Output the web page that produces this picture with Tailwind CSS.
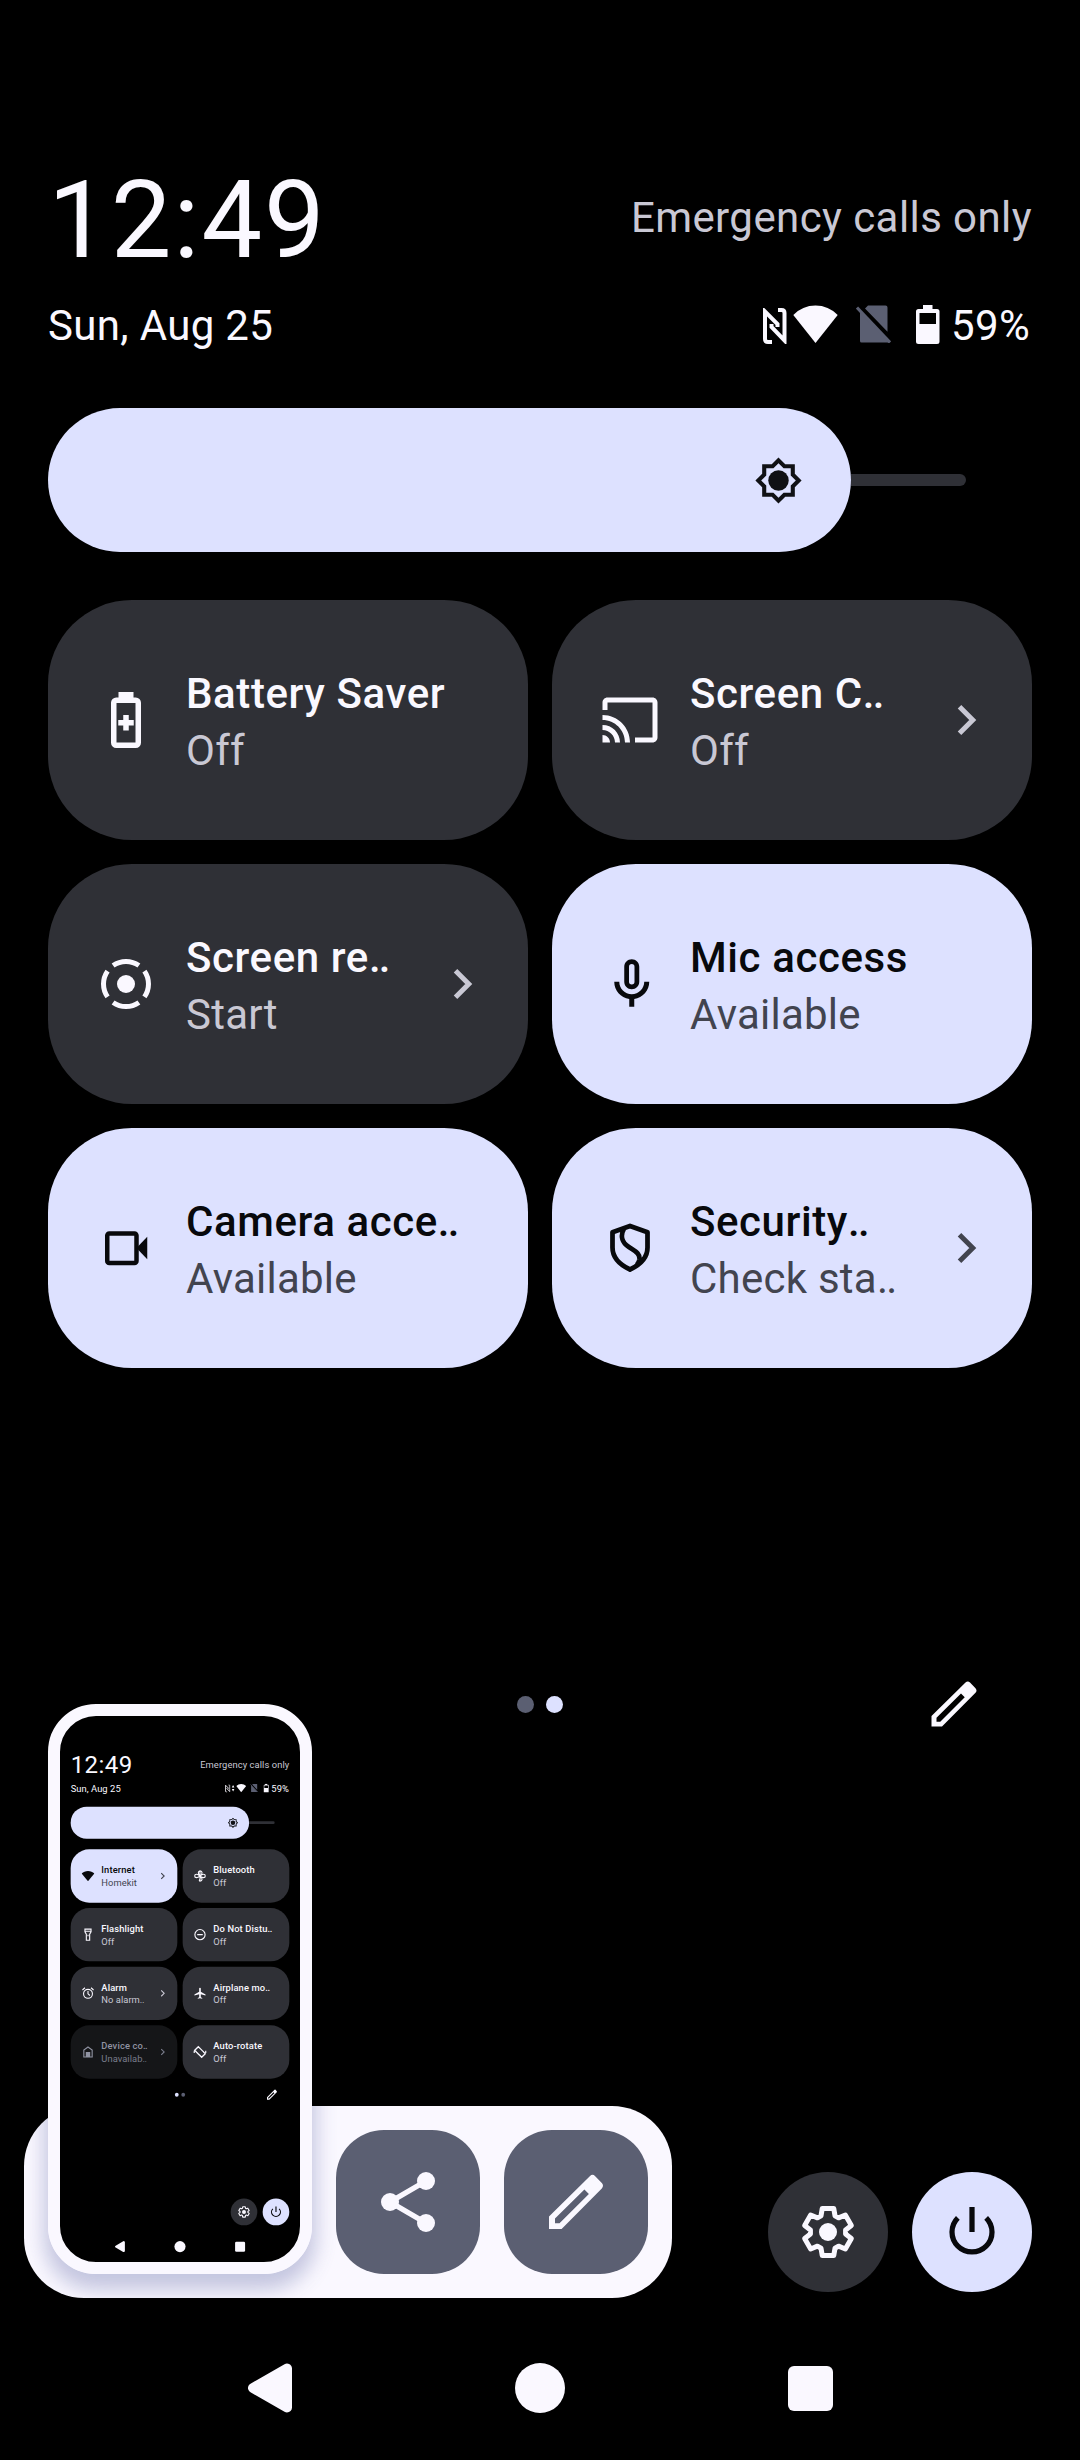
<!DOCTYPE html>
<html lang="en">
<head>
  <meta charset="UTF-8" />
  <meta name="viewport" content="width=device-width, initial-scale=1.0"/>
  <title>Quick Settings</title>
  <script src="https://cdn.jsdelivr.net/npm/@tailwindcss/browser@4"></script>
</head>
<body class="bg-black font-['Roboto',sans-serif]">
  <div class="relative w-[1080px] h-[2460px] overflow-hidden">
    <div id="main"></div>

    <!-- Screenshot popup -->
    <div class="absolute left-6 top-[2106px] w-[648px] h-48 rounded-[60px] bg-[#faf8ff] overflow-hidden flex justify-end items-center gap-6 pr-6">
      <!-- thumbnail shadow, only falls on the bar -->
      <div class="absolute left-6 -top-20 w-[264px] h-[248px] rounded-[48px] shadow-[0_12px_20px_4px_rgba(70,80,150,0.3)]"></div>
      <button class="size-36 rounded-[48px] bg-[#5b5f72] text-[#faf8ff] flex items-center justify-center">
        <svg class="size-[72px]" viewBox="0 0 24 24" fill="currentColor"><path d="M18 5 6 12l12 7" fill="none" stroke="currentColor" stroke-width="1.8"/><circle cx="18" cy="5" r="3"/><circle cx="6" cy="12" r="3"/><circle cx="18" cy="19" r="3"/></svg>
      </button>
      <button class="size-36 rounded-[48px] bg-[#5b5f72] text-[#faf8ff] flex items-center justify-center">
        <svg class="size-[72px]" viewBox="0 0 24 24" fill="currentColor" fill-rule="evenodd"><path d="M3 21v-4.2L16.600 3.400q.9-.9 1.800 0l2.200 2.300q.8.9 0 1.800L7.200 21zM5 19.100h1.500l9.800-9.800-1.500-1.500L5 17.500z"/></svg>
      </button>
    </div>
    <div class="absolute left-12 top-[1704px] w-[264px] h-[570px] rounded-[48px] border-12 border-[#faf8ff] bg-black overflow-hidden">
      <div id="thumb" class="w-[1080px] h-[2460px] origin-top-left scale-[0.2222]"></div>
    </div>
  </div>

  <script>
    const icons = {
      saver: '<path d="M9 .8h6v3H9z"/><rect x="7.1" y="4.1" width="9.8" height="18" rx="1" fill="none" stroke="currentColor" stroke-width="2.2"/><path d="M10.9 10h2.2v2h2v2.2h-2v2h-2.2v-2h-2V12h2z"/>',
      cast: '<path d="M1 18v3h3c0-1.66-1.34-3-3-3zm0-4v2c2.76 0 5 2.24 5 5h2c0-3.87-3.13-7-7-7zm0-4v2c4.97 0 9 4.03 9 9h2c0-6.08-4.93-11-11-11zm20-7H3c-1.1 0-2 .9-2 2v3h2V5h18v14h-7v2h7c1.1 0 2-.9 2-2V5c0-1.1-.9-2-2-2z"/>',
      record: '<circle cx="12" cy="12" r="3.6"/><path d="M6.84 4.63a9 9 0 0 1 10.32 0M19.37 6.84a9 9 0 0 1 0 10.32M17.16 19.37a9 9 0 0 1-10.32 0M4.63 17.16a9 9 0 0 1 0-10.32" fill="none" stroke="currentColor" stroke-width="2"/>',
      mic: '<path transform="translate(.7 .1)" fill-rule="evenodd" d="M12 14c1.66 0 3-1.34 3-3V5c0-1.66-1.34-3-3-3S9 3.34 9 5v6c0 1.66 1.34 3 3 3zm-1.1-9a1.1 1.1 0 0 1 2.2 0v6a1.1 1.1 0 0 1-2.2 0zM17 11c0 2.76-2.24 5-5 5s-5-2.24-5-5H5c0 3.53 2.61 6.43 6 6.92V21h2v-3.08c3.39-.49 6-3.39 6-6.92z"/>',
      camera: '<rect x="4.5" y="6.2" width="11.7" height="11.8" rx=".8" fill="none" stroke="currentColor" stroke-width="1.8"/><path d="m16.2 12 4.3-4.5v9z"/>',
      shield: '<path d="m12 3.200 7 2.500v6.100c0 4-2.700 6.800-7 8.800-4.300-2-7-4.800-7-8.800V5.700zM9.600 4.200C8.300 6.500 8.500 9 10.500 10.800c2.600 2.300 5.500 2.700 5.300 5.700-.1 1-.5 1.600-1.100 2.300" fill="none" stroke="currentColor" stroke-width="1.9" stroke-linejoin="round"/>',
      wifi: '<path d="M12 21.500.6 7.500C3.500 4.600 7.600 3 12 3s8.500 1.600 11.400 4.500z"/>',
      bluetooth: '<path d="M12 2v20M12 2.500c5 .5 5 6 0 9.500M12 21.500c5-.5 5-6 0-9.500M12 2.500C8 4 8 8 12 12s-4 8 0 9.500M2.500 12c0-4 5-4 9.500 0-4.500 4-9.500 4-9.500 0M21.500 12c0-4-5-4-9.500 0 4.500 4 9.500 4 9.500 0" fill="none" stroke="currentColor" stroke-width="2"/>',
      torch: '<path d="M6.500 2h11v5l-2.500 4v11H9V11L6.500 7zM6.500 6h11M12 12v3" fill="none" stroke="currentColor" stroke-width="2"/>',
      dnd: '<circle cx="12" cy="12" r="9.200" fill="none" stroke="currentColor" stroke-width="2"/><path d="M7 11h10v2H7z"/>',
      alarm: '<circle cx="12" cy="13" r="8" fill="none" stroke="currentColor" stroke-width="2"/><path d="M12 8v5l3.500 3M2 6l4.500-4M22 6l-4.500-4" fill="none" stroke="currentColor" stroke-width="2"/>',
      plane: '<path d="M22 16v-2l-8.500-5V3.500a1.500 1.500 0 0 0-3 0V9L2 14v2l8.500-2.500V19L8 20.500V22l4-1 4 1v-1.500L13.500 19v-5.500z"/>',
      home: '<path d="M4.500 21V8.500L12 3l7.500 5.500V21z" fill="none" stroke="currentColor" stroke-width="2"/><path d="M8 12h8v9H8z"/>',
      rotate: '<path d="M12.500 6 9 2.500 2.500 9 6 12.500M2.500 9 9 15.500M11.500 18l3.500 3.500 6.500-6.500-3.500-3.500M21.500 15 12.500 6M1.500 14v-4M22.500 10v4M9 15.500l2.500 2.500" fill="none" stroke="currentColor" stroke-width="2.400"/>'
    };

    const mainTiles = [
      { icon: 'saver', title: 'Battery Saver', sub: 'Off' },
      { icon: 'cast', title: 'Screen C..', sub: 'Off', more: true },
      { icon: 'record', title: 'Screen re..', sub: 'Start', more: true },
      { icon: 'mic', title: 'Mic access', sub: 'Available', state: 'on' },
      { icon: 'camera', title: 'Camera acce..', sub: 'Available', state: 'on' },
      { icon: 'shield', title: 'Security..', sub: 'Check sta..', state: 'on', more: true }
    ];

    const thumbTiles = [
      { icon: 'wifi', title: 'Internet', sub: 'Homekit', state: 'on', more: true },
      { icon: 'bluetooth', title: 'Bluetooth', sub: 'Off' },
      { icon: 'torch', title: 'Flashlight', sub: 'Off' },
      { icon: 'dnd', title: 'Do Not Distu..', sub: 'Off' },
      { icon: 'alarm', title: 'Alarm', sub: 'No alarm..', more: true },
      { icon: 'plane', title: 'Airplane mo..', sub: 'Off' },
      { icon: 'home', title: 'Device co..', sub: 'Unavailab..', state: 'disabled', more: true },
      { icon: 'rotate', title: 'Auto-rotate', sub: 'Off' }
    ];

    const colors = {
      on: ['bg-[#dde1ff] text-[#08090c]', 'text-[#42444f]'],
      off: ['bg-[#2f3036] text-[#faf8ff]', 'text-[#c9c8d4]'],
      disabled: ['bg-[#151618] text-[#9093a2]', 'text-[#7b7e8d]']
    };

    // truncated labels end in two tightly set dots
    const label = s => s.replace('..', '<span class="tracking-[-0.04em]">..</span>');

    function tile(t) {
      const [box, sub] = colors[t.state || 'off'];
      return `
        <div class="h-60 rounded-[84px] pl-12 pr-9 flex items-center ${box}">
          <svg class="size-[60px] shrink-0" viewBox="0 0 24 24" fill="currentColor">${icons[t.icon]}</svg>
          <div class="ml-[30px] pt-1 flex-1 text-[42px] leading-[57px] whitespace-nowrap">
            <div class="font-medium tracking-[0.014em]">${label(t.title)}</div>
            <div class="tracking-[0.006em] ${sub}">${label(t.sub)}</div>
          </div>
          ${t.more ? `<svg class="size-[60px] shrink-0 ${sub}" viewBox="0 0 24 24" fill="none" stroke="currentColor" stroke-width="2"><path d="m9.400 6.700 5.300 5.300-5.300 5.300"/></svg>` : ''}
        </div>`;
    }

    function screen(tiles, page, transfer) {
      const dot = i => i === page ? 'bg-[#dde1ff]' : 'bg-[#5b5f72]';
      return `
      <div class="w-[1080px] h-[2460px] px-12 pt-[156px] flex flex-col text-[#faf8ff]">
        <!-- clock and status icons -->
        <div class="h-32 flex items-center justify-between">
          <div class="text-[108px] leading-[128px] tracking-[0.018em]">12:49</div>
          <div class="mb-[5px] text-[42px] leading-[48px] tracking-[0.01em] text-[#c9c8d4]">Emergency calls only</div>
        </div>
        <div class="mt-[18px] h-12 flex items-center justify-between text-[42px] leading-[48px] tracking-[0.008em]">
          <div>Sun, Aug 25</div>
          <div class="flex items-center pr-[2px]">
            <svg class="w-6 h-9 mb-px" viewBox="0 0 24 36" fill="none" stroke="currentColor" stroke-width="4"><path d="M9 34H5q-3 0-3-3V3.500L14.500 16v3M15 2h3.500q3 0 3 3v27.500L8.500 19v-3"/></svg>
            ${transfer ? '<svg class="w-4 h-9 ml-1" viewBox="0 0 16 36" fill="currentColor"><path d="m8 3 6 11H2zM8 32 2 21h12z"/></svg>' : ''}
            <svg class="w-[45px] h-[38px] ml-[6px] mb-[5px]" viewBox="0 0 45 38" fill="currentColor"><path d="M22.500 38 .3 10Q9.500.5 22.500.5T44.700 10z"/></svg>
            <svg class="w-[35px] h-[38px] ml-[18px] mb-[5px] text-[#5b5f72]" viewBox="0 0 35 38" fill="currentColor"><path d="M9 3.500 12 .5h17.500q2 0 2 2v24.300zM4 6v30q0 1.500 1.500 1.500H33z"/><path d="m1 2.500 33 35" stroke="currentColor" stroke-width="3"/></svg>
            <svg class="w-6 h-[39px] ml-[25px] mb-[4px]" viewBox="0 0 24 39" fill="currentColor" fill-rule="evenodd"><path d="M7 4V0h9.500v4H21q2.500 0 2.500 2.500v30q0 2.500-2.500 2.500H2.500Q0 39 0 36.500v-30Q0 4 2.500 4zM3.500 8v11H20V8z"/></svg>
            <div class="ml-[11px]">59%</div>
          </div>
        </div>

        <!-- brightness -->
        <div class="mt-[58px] h-36 flex items-center">
          <div class="w-[803px] h-36 rounded-full bg-[#dde1ff] text-[#101115] flex items-center justify-end pr-12">
            <svg class="size-[49px]" viewBox="0 0 24 24" fill="currentColor" fill-rule="evenodd"><path d="M20 8.690V4h-4.690L12 .690 8.690 4H4v4.690L.690 12 4 15.310V20h4.690L12 23.310 15.310 20H20v-4.690L23.310 12zM18 14.480V18h-3.520L12 20.480 9.520 18H6v-3.520L3.520 12 6 9.520V6h3.520L12 3.520 14.480 6H18v3.520L20.480 12z"/><circle cx="12" cy="12" r="5"/></svg>
          </div>
          <div class="w-[115px] h-3 rounded-r-full bg-[#2f3036]"></div>
        </div>

        <div class="mt-12 h-[1032px] grid grid-cols-2 gap-6 content-start">${tiles.map(tile).join('')}</div>

        <!-- page dots, edit -->
        <div class="mt-[42px] h-[60px] grid grid-cols-[1fr_auto_1fr] items-center">
          <div></div>
          <div class="flex gap-3">
            <div class="size-[17px] rounded-full ${dot(0)}"></div>
            <div class="size-[17px] rounded-full ${dot(1)}"></div>
          </div>
          <svg class="size-[60px] justify-self-end mr-12" viewBox="0 0 24 24" fill="currentColor" fill-rule="evenodd"><path d="M3 21v-4.200L16.600 3.400q.9-.9 1.800 0l2.200 2.300q.8.9 0 1.800L7.200 21zM5 19.100h1.500l9.800-9.800-1.500-1.500L5 17.500z"/></svg>
        </div>

        <div class="mt-[438px] flex justify-end gap-6">
          <div class="size-[120px] rounded-full bg-[#2f3036] flex items-center justify-center">
            <svg class="size-[60px]" viewBox="-12 -12 24 24" fill="currentColor"><path d="M-2.300-9.400H2.300L2.800-6.500 4.230-5.670 6.940-6.780 9.340-2.620 7.030-.830V.830L9.340 2.620 6.940 6.780 4.230 5.670 2.800 6.500 2.300 9.400H-2.300L-2.800 6.500-4.230 5.670-6.940 6.780-9.340 2.620-7.030.830V-.830L-9.340-2.620-6.940-6.780-4.230-5.670-2.800-6.500z" fill="none" stroke="currentColor" stroke-width="2" stroke-linejoin="round"/><circle r="3.600"/></svg>
          </div>
          <div class="size-[120px] rounded-full bg-[#dde1ff] text-[#08090c] flex items-center justify-center">
            <svg class="size-[60px]" viewBox="0 0 24 24" fill="none" stroke="currentColor" stroke-width="2.100"><path d="M6.340 6.340a8 8 0 1 0 11.320 0M12 2v10"/></svg>
          </div>
        </div>

        <!-- navigation bar -->
        <div class="mt-[66px] h-[60px] mx-[87px] grid grid-cols-3 place-items-center">
          <svg class="w-[46px] h-[50px]" viewBox="0 0 46 50" fill="currentColor" stroke="currentColor" stroke-width="10" stroke-linejoin="round"><path d="M6 25 40 5.500v39z"/></svg>
          <div class="size-[50px] rounded-full bg-[#faf8ff]"></div>
          <div class="size-[45px] rounded-md bg-[#faf8ff]"></div>
        </div>
      </div>`;
    }

    document.getElementById('main').innerHTML = screen(mainTiles, 1, false);
    document.getElementById('thumb').innerHTML = screen(thumbTiles, 0, true);
  </script>
</body>
</html>
